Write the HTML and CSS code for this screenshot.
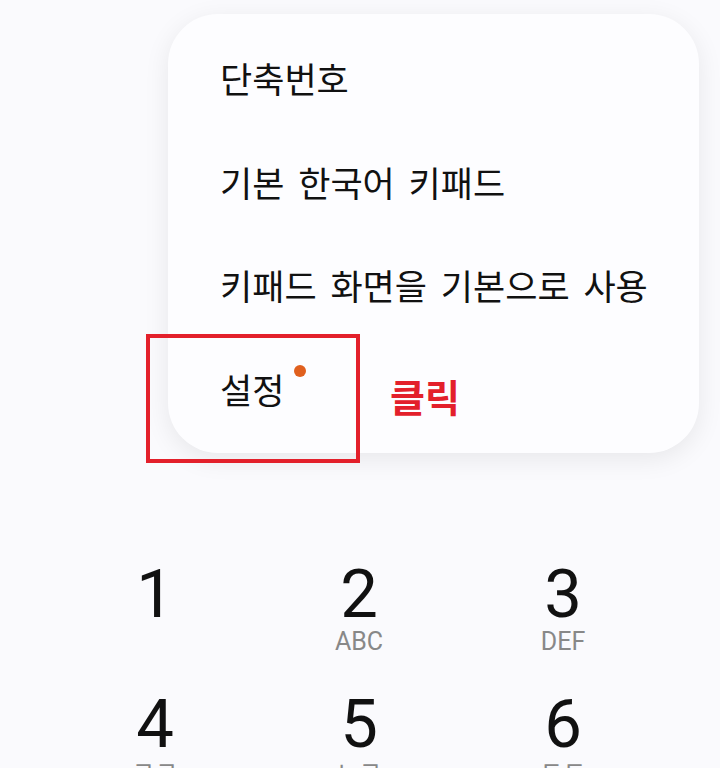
FILE: index.html
```html
<!DOCTYPE html>
<html lang="ko">
<head>
<meta charset="utf-8">
<link rel="stylesheet" href="styles.css">
</head>
<body>
<div class="screen">
  <div class="keypad">
    <div class="key"><span class="digit">1</span><span class="sub"></span></div>
    <div class="key"><span class="digit">2</span><span class="sub">ABC</span></div>
    <div class="key"><span class="digit">3</span><span class="sub">DEF</span></div>
    <div class="key"><span class="digit">4</span><span class="sub">ㄱㅋ</span></div>
    <div class="key"><span class="digit">5</span><span class="sub">ㄴㄹ</span></div>
    <div class="key"><span class="digit">6</span><span class="sub">ㄷㅌ</span></div>
  </div>

  <div class="menu">
    <div class="item">단축번호</div>
    <div class="item">기본 한국어 키패드</div>
    <div class="item">키패드 화면을 기본으로 사용</div>
    <div class="item">설정<span class="dot"></span></div>
  </div>

  <div class="highlight"></div>
  <div class="note">클릭</div>
</div>
</body>
</html>
```

FILE: styles.css
```css
html, body {
  margin: 0;
  padding: 0;
}
body {
  background: #fafafd;
  font-family: "Noto Sans CJK KR", "Noto Sans", sans-serif;
  color: #111;
}
.screen {
  position: relative;
  width: 720px;
  height: 768px;
  overflow: hidden;
}
.keypad {
  display: grid;
  grid-template-columns: repeat(3, 204px);
  grid-auto-rows: 130px;
  padding: 561px 0 0 53px;
}
.key {
  display: flex;
  flex-direction: column;
  align-items: center;
}
.digit {
  font-family: Roboto, "Noto Sans", sans-serif;
  font-size: 67px;
  line-height: 67px;
  color: #111;
}
.sub {
  font-family: Roboto, "Noto Sans", "Noto Sans CJK KR", sans-serif;
  font-size: 25px;
  line-height: 25px;
  color: #888;
  margin-top: 1px;
}
.menu {
  position: absolute;
  left: 168px;
  top: 14px;
  width: 531px;
  height: 439px;
  box-sizing: border-box;
  padding: 12px 0 0 52px;
  background: #fdfdff;
  border-radius: 50px;
  box-shadow: 0 6px 26px rgba(0, 0, 0, 0.08);
  display: flex;
  flex-direction: column;
}
.item {
  height: 103.5px;
  display: flex;
  align-items: center;
  font-size: 35px;
  word-spacing: 4px;
  color: #111;
}
.dot {
  width: 12px;
  height: 12px;
  border-radius: 50%;
  background: #e0601e;
  align-self: flex-start;
  margin-top: 28px;
  margin-left: 10px;
}
.highlight {
  position: absolute;
  left: 146px;
  top: 334px;
  width: 214px;
  height: 129px;
  box-sizing: border-box;
  border: 4px solid #e3202b;
}
.note {
  position: absolute;
  left: 390px;
  top: 370px;
  font-size: 38px;
  line-height: 52px;
  font-weight: 700;
  color: #e3202b;
}
```
